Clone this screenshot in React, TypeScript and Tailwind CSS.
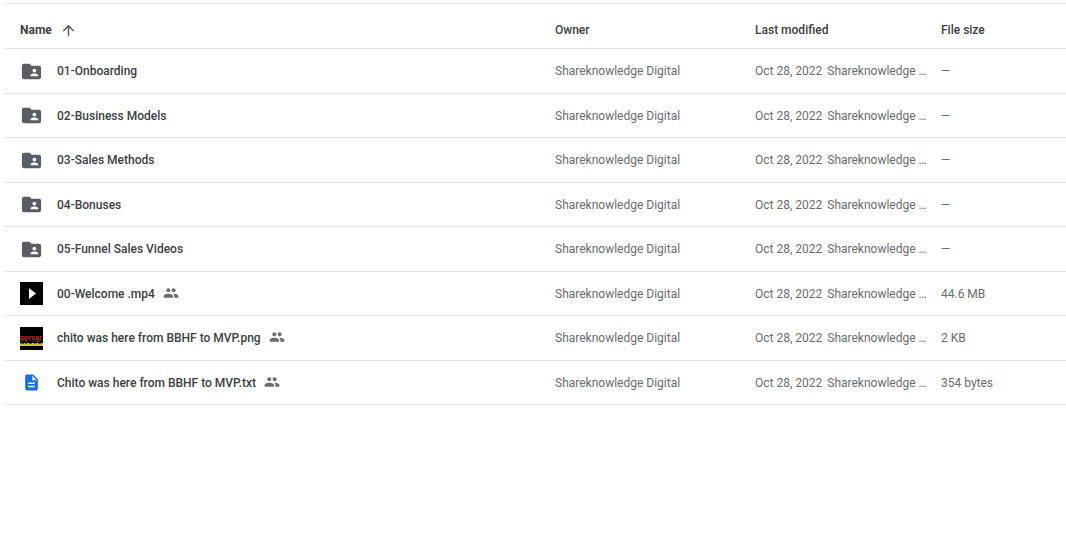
import { MdArrowUpward, MdFolderShared, MdPeople } from "react-icons/md";

type Item = {
  name: string;
  kind: "folder" | "video" | "image" | "text";
  size: string;
};

const items: Item[] = [
  { name: "01-Onboarding", kind: "folder", size: "—" },
  { name: "02-Business Models", kind: "folder", size: "—" },
  { name: "03-Sales Methods", kind: "folder", size: "—" },
  { name: "04-Bonuses", kind: "folder", size: "—" },
  { name: "05-Funnel Sales Videos", kind: "folder", size: "—" },
  { name: "00-Welcome .mp4", kind: "video", size: "44.6 MB" },
  { name: "chito was here from BBHF to MVP.png", kind: "image", size: "2 KB" },
  { name: "Chito was here from BBHF to MVP.txt", kind: "text", size: "354 bytes" },
];

function ItemIcon({ kind }: { kind: Item["kind"] }) {
  if (kind === "folder") {
    return <MdFolderShared className="size-[23px] text-[#5b5c66]" />;
  }

  if (kind === "video") {
    return (
      <svg viewBox="0 0 23 23" className="size-[23px]">
        <rect width="23" height="23" fill="#000" />
        <path d="M9 6v11l7-5.500z" fill="#fff" />
      </svg>
    );
  }

  if (kind === "image") {
    return (
      <svg viewBox="0 0 23 23" className="size-[23px]">
        <rect width="23" height="23" fill="#000" />
        <text x="-1" y="13" fontSize="7" fontWeight="700" fill="#c8202a">
          ipprogr
        </text>
        <rect y="16" width="23" height="3" fill="#d2c22a" />
        <path d="M1 16.500h3m1 0h2m2 0h3m2 0h2m2 0h3" stroke="#5a5210" strokeWidth="1" />
      </svg>
    );
  }

  return (
    <svg viewBox="0 0 24 24" className="size-[19px]">
      <path
        d="M14 2H6c-1.100 0-2 .9-2 2v16c0 1.100.9 2 2 2h12c1.100 0 2-.9 2-2V8l-6-6zm2 16H8v-2h8v2zm0-4H8v-2h8v2zm-3-5V3.500L18.500 9H13z"
        fill="#1a6fe0"
      />
    </svg>
  );
}

function Row({ item }: { item: Item }) {
  return (
    <tr className="odd:h-[45px] even:h-11">
      <td className="border-b border-[#e0e0e0] pl-4">
        <div className="flex items-center">
          <span className="flex w-[23px] shrink-0 justify-center">
            <ItemIcon kind={item.kind} />
          </span>
          <a href="#" className="ml-[14px] truncate font-medium text-[#3c4043]">
            {item.name}
          </a>
          {item.kind !== "folder" && (
            <MdPeople className="mb-0.5 ml-2 size-4 shrink-0 text-[#6b6b6b]" />
          )}
        </div>
      </td>
      <td className="truncate border-b border-[#e0e0e0]">Shareknowledge Digital</td>
      <td className="border-b border-[#e0e0e0]">
        <div className="flex gap-[5px] whitespace-nowrap">
          <span>Oct 28, 2022</span>
          <span>Shareknowledge …</span>
        </div>
      </td>
      <td className="border-b border-[#e0e0e0]">{item.size}</td>
    </tr>
  );
}

export default function App() {
  return (
    <main className="min-h-screen bg-white pt-[3px] pl-1 font-['Roboto',sans-serif]">
      <table className="w-full table-fixed border-separate border-spacing-0 border-t border-[#e0e0e0] text-left text-[12px] leading-4 text-[#6a6c70]">
        <thead className="text-[#3c4043]">
          <tr className="h-[45px]">
            <th className="border-b border-[#e0e0e0] pt-2 pl-4 font-bold">
              <button className="flex items-center gap-2">
                Name
                <MdArrowUpward className="size-[17px] text-[#55565a]" />
              </button>
            </th>
            <th className="w-[200px] border-b border-[#e0e0e0] pt-2 font-medium">Owner</th>
            <th className="w-[186px] border-b border-[#e0e0e0] pt-2 font-medium">Last modified</th>
            <th className="w-[125px] border-b border-[#e0e0e0] pt-2 font-medium">File size</th>
          </tr>
        </thead>
        <tbody>
          {items.map((item) => (
            <Row key={item.name} item={item} />
          ))}
        </tbody>
      </table>
    </main>
  );
}
